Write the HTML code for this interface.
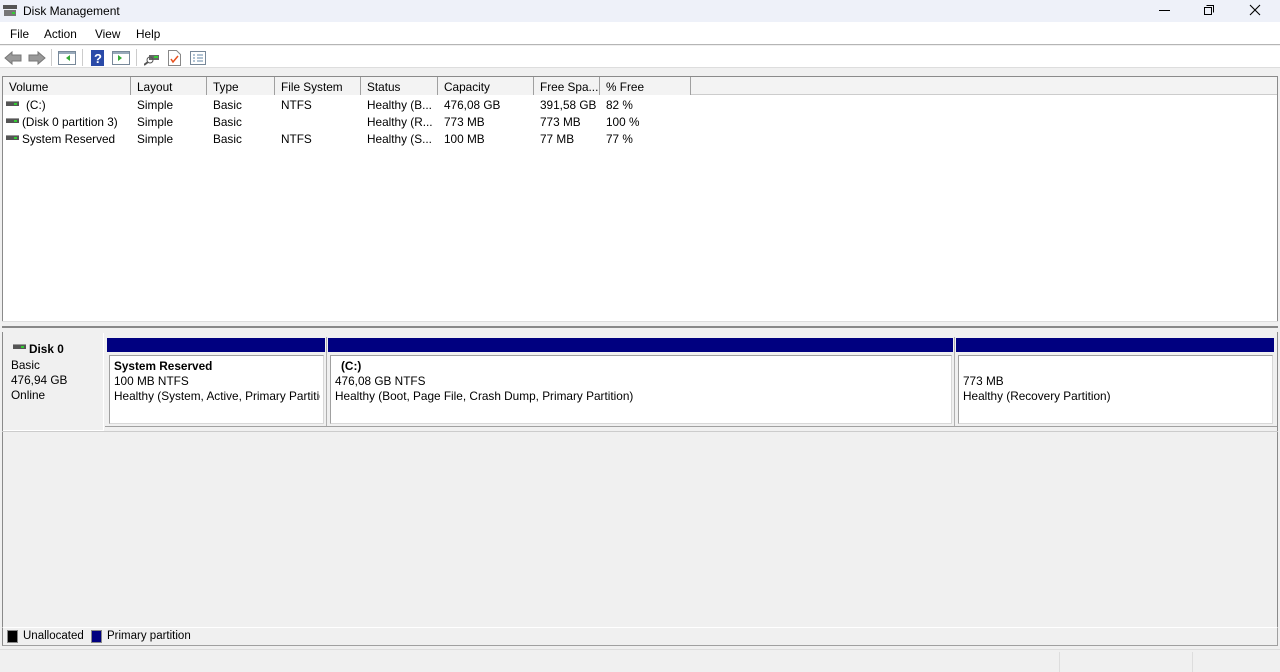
<!DOCTYPE html>
<html><head><meta charset="utf-8"><style>
*{margin:0;padding:0;box-sizing:border-box}
body{width:1280px;height:672px;overflow:hidden;background:#f0f0f0;font-family:"Liberation Sans",sans-serif;font-size:11.8px;color:#000;position:relative}
.a{position:absolute}
.t{position:absolute;white-space:nowrap}
.hd{position:absolute;top:77px;height:18px;border-right:1px solid #a0a0a0;padding:3px 0 0 6px;background:#f3f3f3;white-space:nowrap;overflow:hidden}
.drive{display:inline-block;position:absolute;width:13px;height:5px;background:#555;border-top:1px solid #999}
.drive:after{content:"";position:absolute;right:2px;top:1px;width:3px;height:2px;background:#3c3}
.blue{position:absolute;top:338px;height:14px;background:#000080}
.box{position:absolute;top:355px;height:69px;background:#fff;border:1px solid #a0a0a0;border-right-color:#d8d8d8;border-bottom-color:#d8d8d8}
</style></head><body>
<!-- title bar -->
<div class="a" style="left:0;top:0;width:1280px;height:22px;background:#eef1f9"></div>
<svg class="a" style="left:3px;top:5px" width="14" height="12"><rect x="0" y="0" width="14" height="4" fill="#555"/><rect x="1" y="5" width="12" height="6" fill="#777"/><rect x="9" y="7" width="3" height="2" fill="#3c3"/></svg>
<div class="t" style="left:23px;top:4px;font-size:12px">Disk Management</div>
<div class="a" style="left:1159px;top:10px;width:11px;height:1px;background:#000"></div>
<svg class="a" style="left:1203px;top:4px" width="12" height="12"><rect x="1.5" y="3.5" width="7" height="7" fill="none" stroke="#000"/><path d="M3.5 1.5h7v7" fill="none" stroke="#000"/></svg>
<svg class="a" style="left:1249px;top:4px" width="12" height="12"><path d="M1 1L11 11M11 1L1 11" stroke="#000" stroke-width="1.1"/></svg>
<!-- menu -->
<div class="a" style="left:0;top:22px;width:1280px;height:23px;background:#fff;border-bottom:1px solid #b5b5b5"></div>
<div class="t" style="left:10px;top:27px">File</div>
<div class="t" style="left:44px;top:27px">Action</div>
<div class="t" style="left:95px;top:27px">View</div>
<div class="t" style="left:136px;top:27px">Help</div>
<!-- toolbar -->
<div class="a" style="left:0;top:46px;width:1280px;height:22px;background:#fff;border-bottom:1px solid #ddd"></div>
<svg class="a" style="left:4px;top:50px" width="42" height="16"><path d="M1 8L8 2V5H17V11H8V14Z" fill="#999" stroke="#777"/><path d="M41 8L34 2V5H25V11H34V14Z" fill="#999" stroke="#777"/></svg>
<div class="a" style="left:51px;top:49px;width:1px;height:17px;background:#ccc"></div>
<svg class="a" style="left:58px;top:51px" width="18" height="14"><rect x=".5" y=".5" width="17" height="13" fill="#fff" stroke="#789"/><rect x="1" y="1" width="16" height="2" fill="#9ab"/><path d="M8 7l4-3v6z" fill="#3a3"/></svg>
<div class="a" style="left:82px;top:49px;width:1px;height:17px;background:#ccc"></div>
<svg class="a" style="left:91px;top:50px" width="13" height="16"><rect width="13" height="16" fill="#2a4aa8"/><text x="3" y="13" fill="#fff" font-size="13" font-family="Liberation Sans" font-weight="bold">?</text></svg>
<svg class="a" style="left:112px;top:51px" width="18" height="14"><rect x=".5" y=".5" width="17" height="13" fill="#fff" stroke="#789"/><rect x="1" y="1" width="16" height="2" fill="#9ab"/><path d="M6 4l4 3-4 3z" fill="#3a3"/></svg>
<div class="a" style="left:136px;top:49px;width:1px;height:17px;background:#ccc"></div>
<svg class="a" style="left:144px;top:52px" width="16" height="14"><rect x="5" y="3" width="10" height="5" fill="#666"/><rect x="10" y="4" width="4" height="2" fill="#3c3"/><circle cx="6" cy="8" r="3" fill="none" stroke="#555"/><path d="M4 10L0 13" stroke="#555" stroke-width="2"/></svg>
<svg class="a" style="left:168px;top:50px" width="13" height="16"><path d="M.5.5h8l4 4v11h-12z" fill="#fff" stroke="#888"/><path d="M3 9l2 3 5-6" stroke="#e8501c" stroke-width="1.5" fill="none"/></svg>
<svg class="a" style="left:190px;top:51px" width="16" height="14"><rect x=".5" y=".5" width="15" height="13" fill="#fff" stroke="#789"/><path d="M3 4h2M3 7h2M3 10h2M7 4h6M7 7h6M7 10h6" stroke="#68a"/></svg>
<!-- list pane -->
<div class="a" style="left:2px;top:76px;width:1276px;height:247px;background:#fff;border:1px solid #8a8a8a;border-bottom:none"></div>
<div class="a" style="left:3px;top:77px;width:1274px;height:18px;background:#f3f3f3;border-bottom:1px solid #ccc"></div>
<div class="hd" style="left:3px;width:128px">Volume</div>
<div class="hd" style="left:131px;width:76px">Layout</div>
<div class="hd" style="left:207px;width:68px">Type</div>
<div class="hd" style="left:275px;width:86px">File System</div>
<div class="hd" style="left:361px;width:77px">Status</div>
<div class="hd" style="left:438px;width:96px">Capacity</div>
<div class="hd" style="left:534px;width:66px">Free Spa...</div>
<div class="hd" style="left:600px;width:91px">% Free</div>
<span class="drive" style="left:6px;top:101px"></span><div class="t" style="left:26px;top:98px">(C:)</div>
<span class="drive" style="left:6px;top:118px"></span><div class="t" style="left:22px;top:115px">(Disk 0 partition 3)</div>
<span class="drive" style="left:6px;top:135px"></span><div class="t" style="left:22px;top:132px">System Reserved</div>
<div class="t" style="left:137px;top:98px">Simple</div><div class="t" style="left:137px;top:115px">Simple</div><div class="t" style="left:137px;top:132px">Simple</div>
<div class="t" style="left:213px;top:98px">Basic</div><div class="t" style="left:213px;top:115px">Basic</div><div class="t" style="left:213px;top:132px">Basic</div>
<div class="t" style="left:281px;top:98px">NTFS</div><div class="t" style="left:281px;top:132px">NTFS</div>
<div class="t" style="left:367px;top:98px">Healthy (B...</div><div class="t" style="left:367px;top:115px">Healthy (R...</div><div class="t" style="left:367px;top:132px">Healthy (S...</div>
<div class="t" style="left:444px;top:98px">476,08 GB</div><div class="t" style="left:444px;top:115px">773 MB</div><div class="t" style="left:444px;top:132px">100 MB</div>
<div class="t" style="left:540px;top:98px">391,58 GB</div><div class="t" style="left:540px;top:115px">773 MB</div><div class="t" style="left:540px;top:132px">77 MB</div>
<div class="t" style="left:606px;top:98px">82 %</div><div class="t" style="left:606px;top:115px">100 %</div><div class="t" style="left:606px;top:132px">77 %</div>
<!-- splitter -->
<div class="a" style="left:2px;top:321px;width:1276px;height:7px;background:#f0f0f0;border-top:1px solid #ddd;border-bottom:2px solid #888"></div>
<!-- bottom pane -->
<div class="a" style="left:2px;top:332px;width:1276px;height:296px;background:#f0f0f0;border-left:1px solid #8a8a8a;border-right:1px solid #8a8a8a"></div>
<div class="a" style="left:3px;top:333px;width:101px;height:98px;background:#f0f0f0;border-right:1px solid #fff;border-bottom:1px solid #fff"></div>
<span class="drive" style="left:13px;top:344px"></span>
<div class="t" style="left:29px;top:342px;font-weight:bold">Disk 0</div>
<div class="t" style="left:11px;top:358px">Basic</div>
<div class="t" style="left:11px;top:373px">476,94 GB</div>
<div class="t" style="left:11px;top:388px">Online</div>
<div class="a" style="left:105px;top:335px;width:1172px;height:92px;border-bottom:1px solid #a0a0a0"></div>
<div class="blue" style="left:107px;width:218px"></div>
<div class="blue" style="left:328px;width:625px"></div>
<div class="blue" style="left:956px;width:318px"></div>
<div class="a" style="left:326px;top:337px;width:1px;height:89px;background:#b0b0b0"></div>
<div class="a" style="left:954px;top:337px;width:1px;height:89px;background:#b0b0b0"></div>
<div class="box" style="left:109px;width:215px"></div>
<div class="box" style="left:330px;width:622px"></div>
<div class="box" style="left:958px;width:315px"></div>
<div class="t" style="left:114px;top:359px;font-weight:bold">System Reserved</div>
<div class="t" style="left:114px;top:374px">100 MB NTFS</div>
<div class="t" style="left:114px;top:389px;width:206px;overflow:hidden">Healthy (System, Active, Primary Partition)</div>
<div class="t" style="left:341px;top:359px;font-weight:bold">(C:)</div>
<div class="t" style="left:335px;top:374px">476,08 GB NTFS</div>
<div class="t" style="left:335px;top:389px">Healthy (Boot, Page File, Crash Dump, Primary Partition)</div>
<div class="t" style="left:963px;top:374px">773 MB</div>
<div class="t" style="left:963px;top:389px">Healthy (Recovery Partition)</div>
<div class="a" style="left:2px;top:431px;width:1276px;height:1px;background:#ccc"></div>
<!-- legend -->
<div class="a" style="left:2px;top:627px;width:1276px;height:19px;background:#f0f0f0;border-top:1px solid #fff;border-bottom:1px solid #a0a0a0;border-left:1px solid #8a8a8a;border-right:1px solid #a0a0a0"></div>
<div class="a" style="left:7px;top:630px;width:11px;height:13px;background:#000;border:1px solid #888"></div>
<div class="t" style="left:23px;top:630px;font-size:11.5px">Unallocated</div>
<div class="a" style="left:91px;top:630px;width:11px;height:13px;background:#000080;border:1px solid #888"></div>
<div class="t" style="left:107px;top:630px;font-size:11.5px">Primary partition</div>
<!-- status bar -->
<div class="a" style="left:0;top:649px;width:1280px;height:1px;background:#ddd"></div>
<div class="a" style="left:1059px;top:652px;width:1px;height:20px;background:#ddd"></div>
<div class="a" style="left:1192px;top:652px;width:1px;height:20px;background:#ddd"></div>
</body></html>
